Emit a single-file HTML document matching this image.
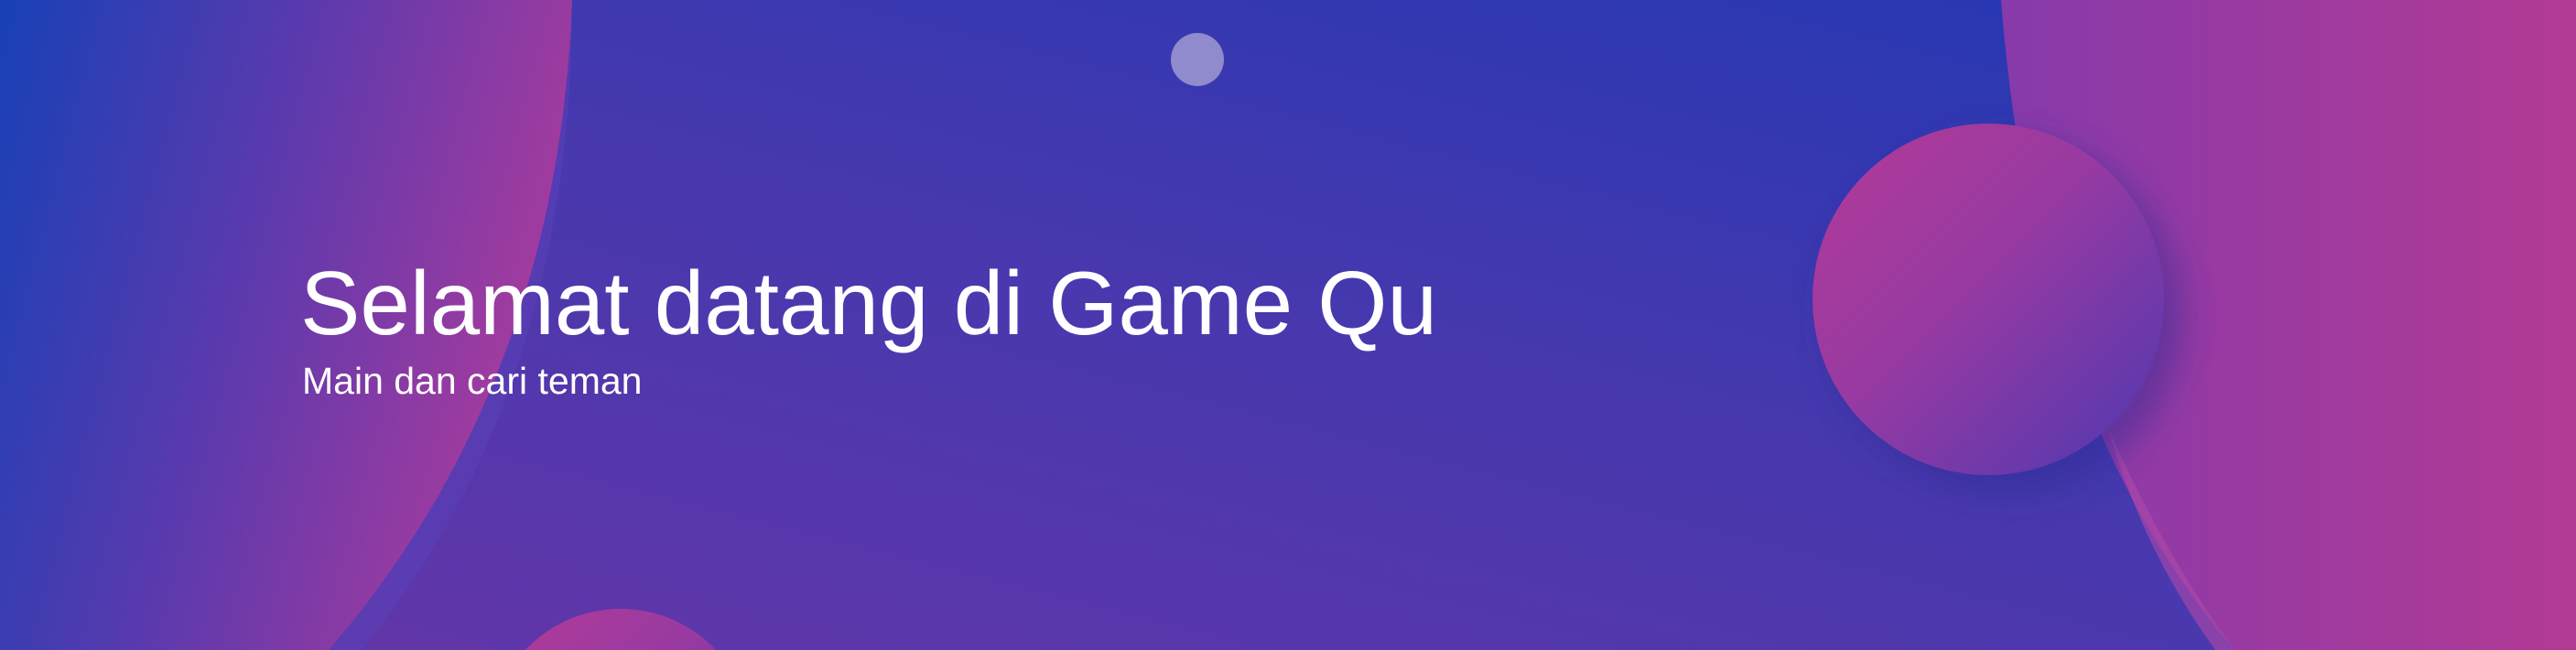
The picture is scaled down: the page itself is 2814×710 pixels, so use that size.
<!DOCTYPE html>
<html><head><meta charset="utf-8"><style>
html,body{margin:0;padding:0;width:2814px;height:710px;overflow:hidden;font-family:"Liberation Sans",sans-serif}
.t{position:absolute;left:328px;top:282px;color:#fff;font-size:98px;line-height:1;white-space:nowrap}
.s{position:absolute;left:330px;top:396px;color:#fff;font-size:41px;line-height:1;white-space:nowrap}
</style></head><body>
<svg width="2814" height="710" style="position:absolute;left:0;top:0;display:block">
<defs>
<linearGradient id="bg" x1="1" y1="0" x2="0" y2="1">
<stop offset="0" stop-color="#1f38b3"/><stop offset="0.5" stop-color="#4838ae"/><stop offset="1" stop-color="#6536a8"/>
</linearGradient>
<linearGradient id="lf" x1="0" y1="0" x2="1" y2="0.3">
<stop offset="0" stop-color="#1840b6"/><stop offset="0.5" stop-color="#5a3aae"/><stop offset="1" stop-color="#a53b9e"/>
</linearGradient>
<linearGradient id="rt" x1="0" y1="0" x2="1" y2="0">
<stop offset="0" stop-color="#873aab"/><stop offset="1" stop-color="#b23a94"/>
</linearGradient>
<linearGradient id="bc" x1="0" y1="0" x2="1" y2="1">
<stop offset="0" stop-color="#b33a98"/><stop offset="0.45" stop-color="#973aa2"/><stop offset="1" stop-color="#4d38b0"/>
</linearGradient>
<filter id="sh" x="-30%" y="-30%" width="160%" height="160%"><feGaussianBlur stdDeviation="18"/></filter>
</defs>
<rect width="2814" height="710" fill="url(#bg)"/>
<path d="M0,0 L625,0 Q610,420 359,710 L0,710 Z" fill="url(#lf)"/>
<path d="M625,0 Q610,420 359,710 L395,710 Q625,430 625,0 Z" fill="#5a3fb8" opacity="0.6"/>
<path d="M2186,0 Q2220,450 2441,710 L2814,710 L2814,0 Z" fill="url(#rt)"/>
<path d="M2300,460 Q2360,600 2441,710 L2420,710 Q2340,600 2300,460 Z" fill="#b04aa8" opacity="0.6"/>
<circle cx="1308" cy="65" r="29" fill="#8f8bcc"/>
<circle cx="2190" cy="345" r="195" fill="#2a2a90" opacity="0.45" filter="url(#sh)"/>
<circle cx="2172" cy="327" r="192" fill="url(#bc)"/>
<circle cx="678" cy="808" r="143" fill="url(#bc)"/>
</svg>
<div class="t">Selamat datang di Game Qu</div>
<div class="s">Main dan cari teman</div>
</body></html>
